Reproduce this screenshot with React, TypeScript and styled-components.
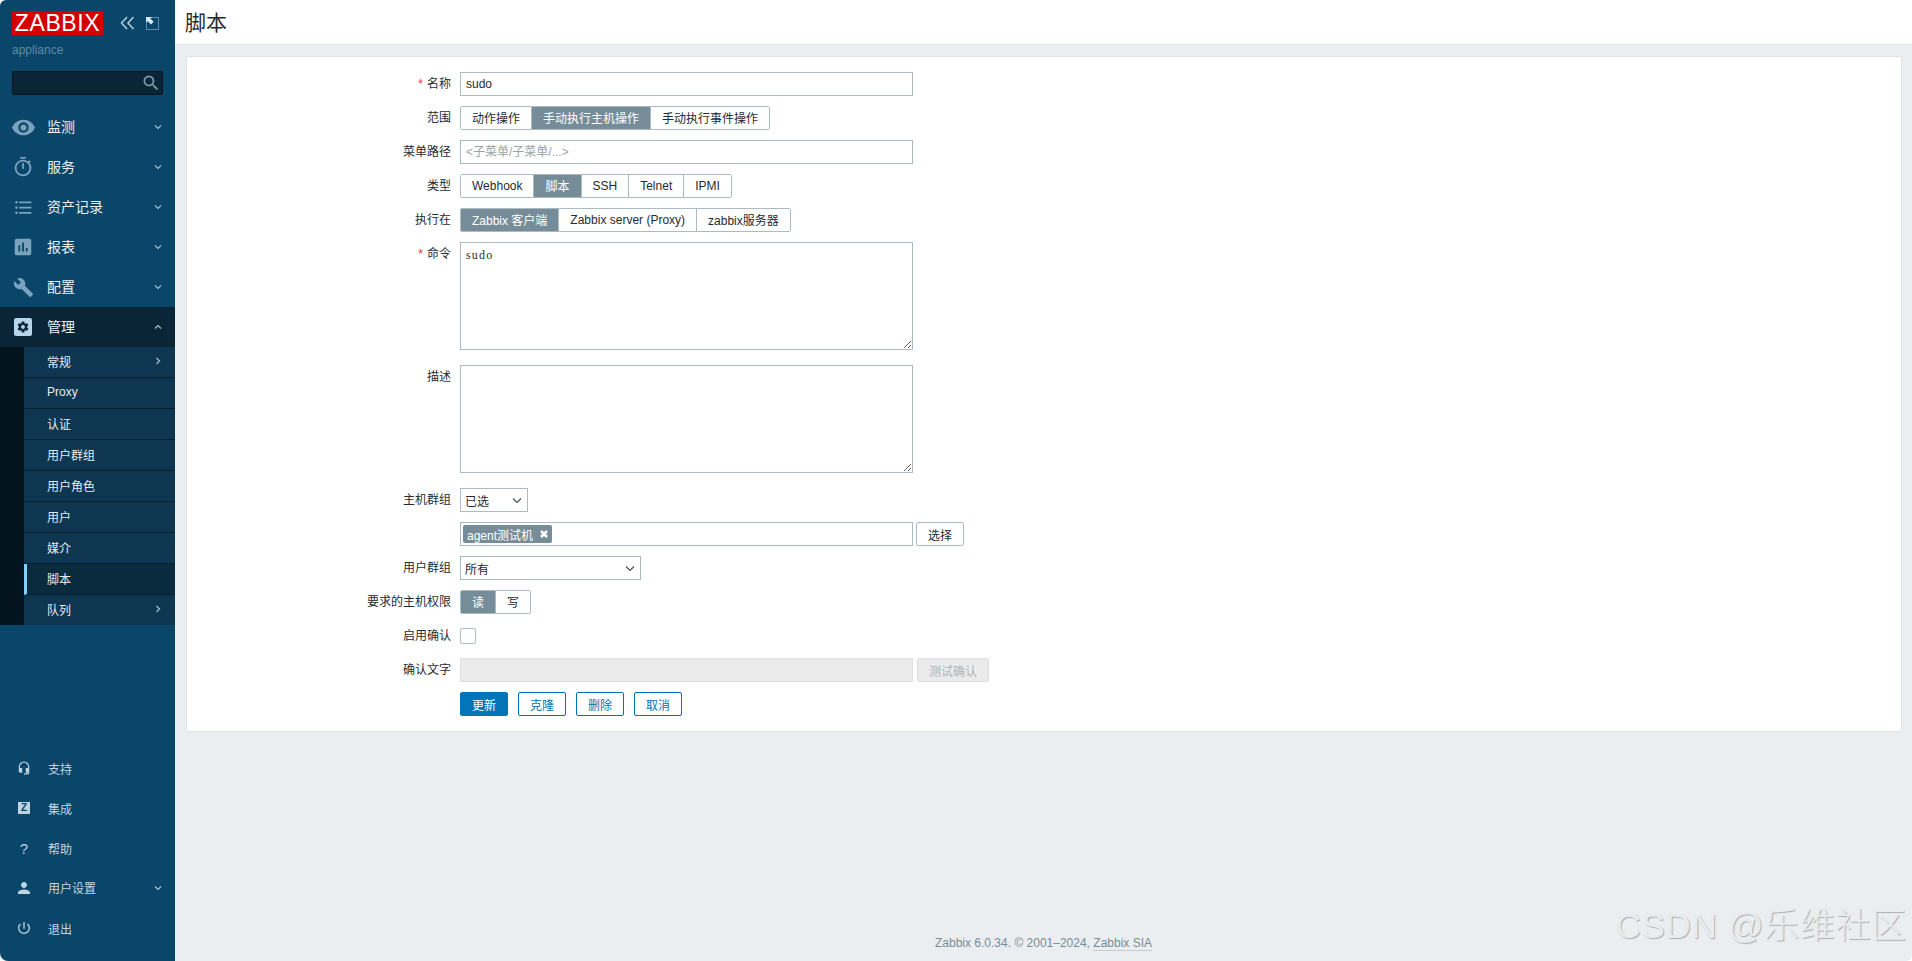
import styled, { createGlobalStyle } from "styled-components";
import { ReactNode } from "react";
import {
  MdVisibility,
  MdOutlineTimer,
  MdFormatListBulleted,
  MdAssessment,
  MdBuild,
  MdHeadsetMic,
  MdPerson,
  MdPowerSettingsNew,
  MdSearch,
} from "react-icons/md";

const FONT = `"Liberation Sans", "Noto Sans CJK SC", sans-serif`;

const GlobalStyle = createGlobalStyle`
  html, body {
    margin: 0;
    padding: 0;
    background: #ffffff;
    overflow: hidden;
  }
  * {
    box-sizing: border-box;
  }
  body {
    font-family: ${FONT};
    font-size: 12px;
    color: #1f2c33;
  }
`;

const Layout = styled.div`
  display: flex;
  width: 100vw;
  height: 100vh;
`;

/* sidebar */

const Sidebar = styled.aside`
  width: 175px;
  flex-shrink: 0;
  display: flex;
  flex-direction: column;
  background: #0a466a;
  border-radius: 6px 0 0 8px;
`;

const Brand = styled.div`
  display: flex;
  align-items: center;
  height: 24px;
  margin: 11px 0 0 12px;
`;

const Logo = styled.div`
  width: 91px;
  height: 24px;
  background: #d40000;
  color: #ffffff;
  font-size: 23px;
  line-height: 24px;
  text-align: center;
  letter-spacing: 0.6px;
`;

const BrandTools = styled.div`
  display: flex;
  align-items: center;
  gap: 11px;
  margin-left: 17px;
  color: #b5cfe0;
`;

const Appliance = styled.div`
  margin: 8px 0 0 12px;
  color: #5d8aa6;
  font-size: 12px;
  line-height: 14px;
`;

const SearchBox = styled.div`
  display: flex;
  align-items: center;
  justify-content: flex-end;
  width: 151px;
  height: 24px;
  margin: 14px 0 12px 12px;
  padding-right: 1px;
  background: #0a2636;
  border: 1px solid #04141e;
  border-radius: 2px;
  color: #7d9db0;
`;

const NavItem = styled.div<{ $active?: boolean }>`
  display: flex;
  align-items: center;
  height: 40px;
  background: ${(props) => (props.$active ? "#0a2636" : "transparent")};
  color: #e8f0f5;
  font-size: 14px;
`;

const NavIcon = styled.span<{ $active?: boolean }>`
  display: flex;
  align-items: center;
  justify-content: center;
  width: 47px;
  padding-right: 1px;
  color: ${(props) => (props.$active ? "#b5d6ea" : "#7ba3bd")};
`;

const NavLabel = styled.span`
  flex: 1;
  padding-bottom: 2px;
`;

const Caret = styled.svg`
  margin-right: 13px;
  fill: none;
  stroke: #a9c0ce;
  stroke-width: 1.2;
`;

const SubMenu = styled.div`
  padding-left: 24px;
  background: #04141e;
`;

const SubItem = styled.div<{ $active?: boolean }>`
  display: flex;
  align-items: center;
  justify-content: space-between;
  height: 31px;
  padding-left: ${(props) => (props.$active ? "20px" : "23px")};
  padding-bottom: 2px;
  background: ${(props) => (props.$active ? "#0a2a3e" : "#0f3650")};
  border-left: ${(props) => (props.$active ? "3px solid #7fcfff" : "none")};
  border-bottom: 1px solid #06202f;
  color: #e4ecf1;
  font-size: 12px;

  &:last-child {
    height: 30px;
    border-bottom: none;
  }
`;

const BottomNav = styled.div`
  margin-top: auto;
  padding-bottom: 13px;
`;

const BottomItem = styled.div`
  display: flex;
  align-items: center;
  height: 40px;
  color: #c6d6e0;
  font-size: 12px;
`;

const BottomIcon = styled.span`
  display: flex;
  align-items: center;
  justify-content: center;
  width: 48px;
  color: #bcd3e2;
`;

const ZIcon = styled.span`
  display: block;
  width: 12px;
  height: 12px;
  background: #bcd3e2;
  color: #0a466a;
  font-size: 10px;
  font-weight: bold;
  line-height: 12px;
  text-align: center;
`;

const HelpIcon = styled.span`
  font-size: 15px;
  color: #bcd3e2;
`;

/* main column */

const Main = styled.main`
  position: relative;
  flex: 1;
  display: flex;
  flex-direction: column;
  background: #ebeef0;
  border-bottom-right-radius: 6px;
`;

const Header = styled.header`
  display: flex;
  align-items: center;
  height: 45px;
  padding: 0 0 2px 10px;
  background: #ffffff;
  border-bottom: 1px solid #dfe4e7;
  font-size: 21px;
  color: #1f2c33;
`;

const Content = styled.div`
  padding: 11px 10px 0 11px;
`;

const Card = styled.form`
  display: grid;
  grid-template-columns: 264px 1fr;
  column-gap: 9px;
  row-gap: 10px;
  align-items: start;
  padding: 15px 0;
  background: #ffffff;
  border: 1px solid #dfe4e7;
`;

const Label = styled.label`
  display: block;
  line-height: 24px;
  text-align: right;
`;

const Required = styled.span`
  margin-right: 4px;
  color: #e33734;
`;

const Line = styled.div`
  display: flex;
  align-items: center;
  min-height: 24px;
`;

const TextInput = styled.input`
  display: block;
  width: 453px;
  height: 24px;
  padding: 0 5px;
  background: #ffffff;
  border: 1px solid #acbbc2;
  border-radius: 0;
  outline: none;
  font-family: ${FONT};
  font-size: 12px;
  color: #1f2c33;

  &::placeholder {
    color: #9aa3a8;
    opacity: 1;
  }
  &:disabled {
    background: #ebebeb;
    border-color: #dcdfe0;
  }
`;

const TextArea = styled.textarea`
  display: block;
  width: 453px;
  height: 108px;
  margin-bottom: 5px;
  padding: 5px;
  background: #ffffff;
  border: 1px solid #acbbc2;
  border-radius: 0;
  outline: none;
  font-family: "Liberation Serif", serif;
  font-size: 12px;
  letter-spacing: 1.2px;
  color: #1f2c33;
`;

const Segments = styled.div`
  display: inline-flex;
  height: 24px;
  border: 1px solid #acbbc2;
  border-radius: 2px;
  overflow: hidden;
`;

const Segment = styled.span<{ $on?: boolean }>`
  display: flex;
  align-items: center;
  padding: 0 11px 1px;
  background: ${(props) => (props.$on ? "#768d99" : "#ffffff")};
  border-right: 1px solid #acbbc2;
  color: ${(props) => (props.$on ? "#ffffff" : "#1f2c33")};

  &:last-child {
    border-right: none;
  }
`;

const Dropdown = styled.div<{ $width: number }>`
  display: flex;
  align-items: center;
  justify-content: space-between;
  width: ${(props) => props.$width}px;
  height: 24px;
  padding: 0 5px 0 4px;
  background: #ffffff;
  border: 1px solid #acbbc2;
`;

const DropdownCaret = styled.svg`
  fill: none;
  stroke: #3d4c55;
  stroke-width: 1.1;
`;

const MultiBox = styled.div`
  display: flex;
  align-items: center;
  width: 453px;
  height: 24px;
  padding-left: 2px;
  background: #ffffff;
  border: 1px solid #acbbc2;
`;

const Chip = styled.span`
  display: flex;
  align-items: center;
  gap: 7px;
  height: 18px;
  padding: 0 4px 0 4px;
  background: #768d99;
  border-radius: 2px;
  color: #ffffff;
`;

const ChipClose = styled.svg`
  stroke: #ffffff;
  stroke-width: 2.6;
`;

const GreyButton = styled.button<{ $disabled?: boolean }>`
  height: 24px;
  padding: 0 11px;
  margin-left: ${(props) => (props.$disabled ? "4px" : "3px")};
  background: ${(props) => (props.$disabled ? "#ebebeb" : "#ffffff")};
  border: 1px solid ${(props) => (props.$disabled ? "#dcdfe0" : "#acbbc2")};
  border-radius: 2px;
  font-family: ${FONT};
  font-size: 12px;
  color: ${(props) => (props.$disabled ? "#acb4b8" : "#1f2c33")};
`;

const CheckBox = styled.span`
  display: block;
  width: 16px;
  height: 16px;
  background: #ffffff;
  border: 1px solid #acbbc2;
  border-radius: 2px;
`;

const Actions = styled.div`
  display: flex;
  gap: 10px;
`;

const ActionButton = styled.button<{ $primary?: boolean }>`
  width: 48px;
  height: 24px;
  padding: 0;
  background: ${(props) => (props.$primary ? "#0275b8" : "#ffffff")};
  border: 1px solid #0275b8;
  border-radius: 2px;
  font-family: ${FONT};
  font-size: 12px;
  color: ${(props) => (props.$primary ? "#ffffff" : "#0275b8")};
`;

const Footer = styled.footer`
  margin-top: auto;
  padding-bottom: 11px;
  color: #768d99;
  font-size: 12px;
  line-height: 14px;
  text-align: center;
`;

const FooterLink = styled.span`
  border-bottom: 1px solid #c5ccd0;
`;

const Watermark = styled.div`
  position: absolute;
  right: 5px;
  bottom: 15px;
  color: #e9ecee;
  font-family: "Liberation Sans", "Noto Sans CJK SC", sans-serif;
  font-size: 35px;
  font-weight: 300;
  line-height: 40px;
  letter-spacing: 0.7px;
  text-shadow: 1px 1px 1px #a9adb1;
  white-space: nowrap;
`;

/* small drawings */

const CaretDown = () => (
  <Caret width="8" height="6" viewBox="0 0 8 6">
    <path d="M1 1.5 L4 4.5 L7 1.5" />
  </Caret>
);

const CaretUp = () => (
  <Caret width="8" height="6" viewBox="0 0 8 6">
    <path d="M1 4.5 L4 1.5 L7 4.5" />
  </Caret>
);

const CaretRight = () => (
  <Caret width="6" height="8" viewBox="0 0 6 8" style={{ marginRight: 14 }}>
    <path d="M1.5 1 L4.5 4 L1.5 7" />
  </Caret>
);

const DoubleLeft = () => (
  <svg width="15" height="14" viewBox="0 0 15 14" fill="none" stroke="currentColor" strokeWidth="1.5">
    <path d="M7 1 L1.5 7 L7 13" />
    <path d="M13.5 1 L8 7 L13.5 13" />
  </svg>
);

const Expand = () => (
  <svg width="13" height="13" viewBox="0 0 13 13">
    <rect x="0.5" y="0.5" width="12" height="12" fill="#0a466a" stroke="currentColor" strokeDasharray="1 1" />
    <path d="M0 0 H6 L4.4 1.6 L7.6 4.8 L5 7.4 L1.6 4.2 L0 5.8 Z" fill="#dbe8f0" />
  </svg>
);

const GearBox = () => (
  <svg width="18" height="18" viewBox="0 0 18 18">
    <rect width="18" height="18" rx="2" fill="#b5d6ea" />
    <g transform="translate(2.4 2.4) scale(0.55)">
      <path
        fill="#0a2636"
        d="M19.43 12.98c.04-.32.07-.64.07-.98s-.03-.66-.07-.98l2.11-1.65c.19-.15.24-.42.12-.64l-2-3.46c-.12-.22-.39-.3-.61-.22l-2.49 1c-.52-.4-1.08-.73-1.69-.98l-.38-2.65C14.46 2.18 14.25 2 14 2h-4c-.25 0-.46.18-.49.42l-.38 2.65c-.61.25-1.17.59-1.69.98l-2.49-1c-.23-.09-.49 0-.61.22l-2 3.46c-.13.22-.07.49.12.64l2.11 1.65c-.04.32-.07.65-.07.98s.03.66.07.98l-2.11 1.65c-.19.15-.24.42-.12.64l2 3.46c.12.22.39.3.61.22l2.49-1c.52.4 1.08.73 1.69.98l.38 2.65c.03.24.24.42.49.42h4c.25 0 .46-.18.49-.42l.38-2.65c.61-.25 1.17-.59 1.69-.98l2.49 1c.23.09.49 0 .61-.22l2-3.46c.12-.22.07-.49-.12-.64l-2.11-1.65zM12 15.5c-1.93 0-3.5-1.57-3.5-3.5s1.57-3.5 3.5-3.5 3.5 1.57 3.5 3.5-1.57 3.5-3.5 3.5z"
      />
    </g>
  </svg>
);

const SelectCaret = () => (
  <DropdownCaret width="10" height="7" viewBox="0 0 10 7">
    <path d="M1 1.5 L5 5.5 L9 1.5" />
  </DropdownCaret>
);

function Row({ label, required, children }: { label?: string; required?: boolean; children: ReactNode }) {
  return (
    <>
      <Label>
        {required && <Required>*</Required>}
        {label}
      </Label>
      <Line>{children}</Line>
    </>
  );
}

const topMenu = [
  { name: "监测", icon: <MdVisibility size={25} /> },
  { name: "服务", icon: <MdOutlineTimer size={22} /> },
  { name: "资产记录", icon: <MdFormatListBulleted size={21} /> },
  { name: "报表", icon: <MdAssessment size={22} /> },
  { name: "配置", icon: <MdBuild size={21} /> },
];

const subMenu = ["常规", "Proxy", "认证", "用户群组", "用户角色", "用户", "媒介", "脚本", "队列"];

export default function App() {
  return (
    <Layout>
      <GlobalStyle />
      <Sidebar>
        <Brand>
          <Logo>ZABBIX</Logo>
          <BrandTools>
            <DoubleLeft />
            <Expand />
          </BrandTools>
        </Brand>
        <Appliance>appliance</Appliance>
        <SearchBox>
          <MdSearch size={20} />
        </SearchBox>
        {topMenu.map((item) => (
          <NavItem key={item.name}>
            <NavIcon>{item.icon}</NavIcon>
            <NavLabel>{item.name}</NavLabel>
            <CaretDown />
          </NavItem>
        ))}
        <NavItem $active>
          <NavIcon $active>
            <GearBox />
          </NavIcon>
          <NavLabel>管理</NavLabel>
          <CaretUp />
        </NavItem>
        <SubMenu>
          {subMenu.map((name) => (
            <SubItem key={name} $active={name === "脚本"}>
              {name}
              {(name === "常规" || name === "队列") && <CaretRight />}
            </SubItem>
          ))}
        </SubMenu>
        <BottomNav>
          <BottomItem>
            <BottomIcon>
              <MdHeadsetMic size={14} />
            </BottomIcon>
            支持
          </BottomItem>
          <BottomItem>
            <BottomIcon>
              <ZIcon>Z</ZIcon>
            </BottomIcon>
            集成
          </BottomItem>
          <BottomItem>
            <BottomIcon>
              <HelpIcon>?</HelpIcon>
            </BottomIcon>
            帮助
          </BottomItem>
          <BottomItem>
            <BottomIcon>
              <MdPerson size={18} />
            </BottomIcon>
            <NavLabel>用户设置</NavLabel>
            <CaretDown />
          </BottomItem>
          <BottomItem>
            <BottomIcon>
              <MdPowerSettingsNew size={16} />
            </BottomIcon>
            退出
          </BottomItem>
        </BottomNav>
      </Sidebar>

      <Main>
        <Header>脚本</Header>
        <Content>
          <Card>
            <Row label="名称" required>
              <TextInput defaultValue="sudo" />
            </Row>
            <Row label="范围">
              <Segments>
                <Segment>动作操作</Segment>
                <Segment $on>手动执行主机操作</Segment>
                <Segment>手动执行事件操作</Segment>
              </Segments>
            </Row>
            <Row label="菜单路径">
              <TextInput placeholder="<子菜单/子菜单/...>" />
            </Row>
            <Row label="类型">
              <Segments>
                <Segment>Webhook</Segment>
                <Segment $on>脚本</Segment>
                <Segment>SSH</Segment>
                <Segment>Telnet</Segment>
                <Segment>IPMI</Segment>
              </Segments>
            </Row>
            <Row label="执行在">
              <Segments>
                <Segment $on>Zabbix 客户端</Segment>
                <Segment>Zabbix server (Proxy)</Segment>
                <Segment>zabbix服务器</Segment>
              </Segments>
            </Row>
            <Row label="命令" required>
              <TextArea defaultValue="sudo" />
            </Row>
            <Row label="描述">
              <TextArea />
            </Row>
            <Row label="主机群组">
              <Dropdown $width={68}>
                已选
                <SelectCaret />
              </Dropdown>
            </Row>
            <Row>
              <MultiBox>
                <Chip>
                  agent测试机
                  <ChipClose width="8" height="8" viewBox="0 0 8 8">
                    <path d="M1 1 L7 7 M7 1 L1 7" />
                  </ChipClose>
                </Chip>
              </MultiBox>
              <GreyButton type="button">选择</GreyButton>
            </Row>
            <Row label="用户群组">
              <Dropdown $width={181}>
                所有
                <SelectCaret />
              </Dropdown>
            </Row>
            <Row label="要求的主机权限">
              <Segments>
                <Segment $on>读</Segment>
                <Segment>写</Segment>
              </Segments>
            </Row>
            <Row label="启用确认">
              <CheckBox />
            </Row>
            <Row label="确认文字">
              <TextInput disabled />
              <GreyButton type="button" $disabled>
                测试确认
              </GreyButton>
            </Row>
            <Row>
              <Actions>
                <ActionButton type="button" $primary>
                  更新
                </ActionButton>
                <ActionButton type="button">克隆</ActionButton>
                <ActionButton type="button">删除</ActionButton>
                <ActionButton type="button">取消</ActionButton>
              </Actions>
            </Row>
          </Card>
        </Content>
        <Footer>
          Zabbix 6.0.34. © 2001–2024, <FooterLink>Zabbix SIA</FooterLink>
        </Footer>
        <Watermark>CSDN @乐维社区</Watermark>
      </Main>
    </Layout>
  );
}
